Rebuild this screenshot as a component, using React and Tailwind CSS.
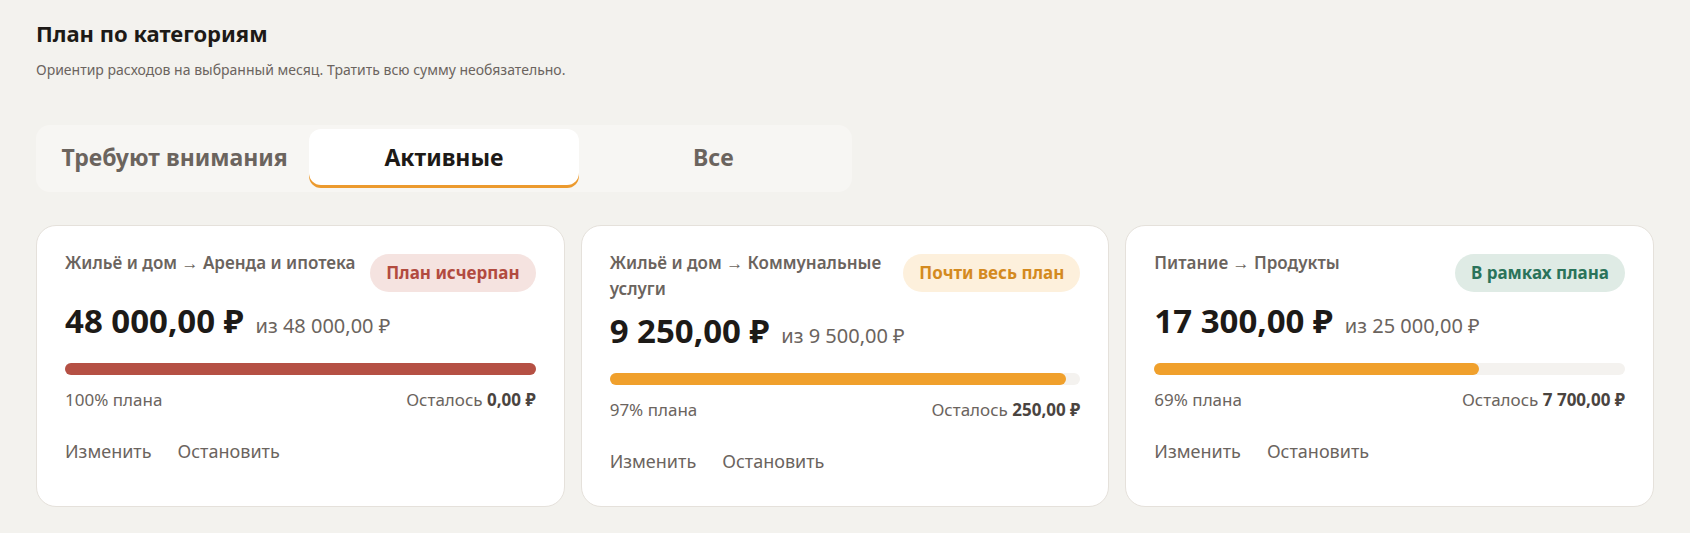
import { useState } from 'react'

const TABS = ['Требуют внимания', 'Активные', 'Все']

const PLANS = [
  {
    id: 'rent',
    title: 'Жильё и дом → Аренда и ипотека',
    badge: 'План исчерпан',
    tone: 'over',
    spent: '48 000,00 ₽',
    limit: '48 000,00 ₽',
    pct: 100,
    left: '0,00 ₽',
  },
  {
    id: 'utilities',
    title: 'Жильё и дом → Коммунальные услуги',
    badge: 'Почти весь план',
    tone: 'near',
    spent: '9 250,00 ₽',
    limit: '9 500,00 ₽',
    pct: 97,
    left: '250,00 ₽',
  },
  {
    id: 'food',
    title: 'Питание → Продукты',
    badge: 'В рамках плана',
    tone: 'ok',
    spent: '17 300,00 ₽',
    limit: '25 000,00 ₽',
    pct: 69,
    left: '7 700,00 ₽',
  },
]

const BADGE = {
  over: 'bg-[#f5e3e0] text-[#b24b3f]',
  near: 'bg-[#fdf0dc] text-[#d48a1f]',
  ok: 'bg-[#dfebe5] text-[#2b735a]',
}

const BAR = {
  over: 'bg-[#b55044]',
  near: 'bg-[#f0a02c]',
  ok: 'bg-[#f0a02c]',
}

function PlanCard({ plan }) {
  return (
    <div className="rounded-[20px] border border-[#e5e1db] bg-white px-7 pt-6 pb-[31px]">
      <div className="flex items-start justify-between gap-3">
        <p className="text-[17px] leading-[26px] font-semibold text-[#6b645e]">{plan.title}</p>
        <span className={`mt-1 shrink-0 rounded-full px-4 py-[9px] text-[17px] leading-5 font-bold ${BADGE[plan.tone]}`}>
          {plan.badge}
        </span>
      </div>

      <div className="mt-[9px] flex items-baseline gap-3">
        <span className="text-[33px] leading-10 font-bold text-[#1d1a17]">{plan.spent}</span>
        <span className="text-[20px] text-[#6b645e]">из {plan.limit}</span>
      </div>

      <div className="mt-[22px] h-3 w-full rounded-full bg-[#f4f2ef]">
        <div className={`h-3 rounded-full ${BAR[plan.tone]}`} style={{ width: `${plan.pct}%` }} />
      </div>

      <div className="mt-[13px] flex items-center justify-between text-[17px] leading-6 text-[#6b645e]">
        <span>{plan.pct}% плана</span>
        <span>
          Осталось <strong className="font-bold text-[#4a443f]">{plan.left}</strong>
        </span>
      </div>

      <div className="mt-[25px] flex gap-[26px] text-[18px] leading-7 text-[#6b645e]">
        <button className="hover:text-[#1d1a17]">Изменить</button>
        <button className="hover:text-[#1d1a17]">Остановить</button>
      </div>
    </div>
  )
}

export default function App() {
  const [tab, setTab] = useState(1)

  return (
    <div className="min-h-[533px] bg-[#f3f2ee] px-9 pt-[18px] pb-7 font-['Segoe_UI','Noto_Sans',sans-serif]">
      <h1 className="text-[22px] leading-[30px] font-bold text-[#1d1a17]">План по категориям</h1>
      <p className="mt-[11px] text-[14px] leading-[21px] text-[#6b645e]">
        Ориентир расходов на выбранный месяц. Тратить всю сумму необязательно.
      </p>

      {/* вкладки */}
      <div className="mt-[45px] grid w-[816px] grid-cols-3 rounded-[14px] bg-[#f7f6f3] px-1 pt-1 pb-[7px]">
        {TABS.map((t, i) => (
          <button
            key={t}
            onClick={() => setTab(i)}
            className={`h-[56px] rounded-[12px] text-[23px] font-bold ${
              tab === i
                ? 'bg-white text-[#1d1a17] shadow-[0_3px_0_0_#ec9a2e]'
                : 'text-[#6b645e]'
            }`}
          >
            {t}
          </button>
        ))}
      </div>

      <div className="mt-[33px] grid grid-cols-3 gap-4">
        {PLANS.map((p) => (
          <PlanCard key={p.id} plan={p} />
        ))}
      </div>
    </div>
  )
}
